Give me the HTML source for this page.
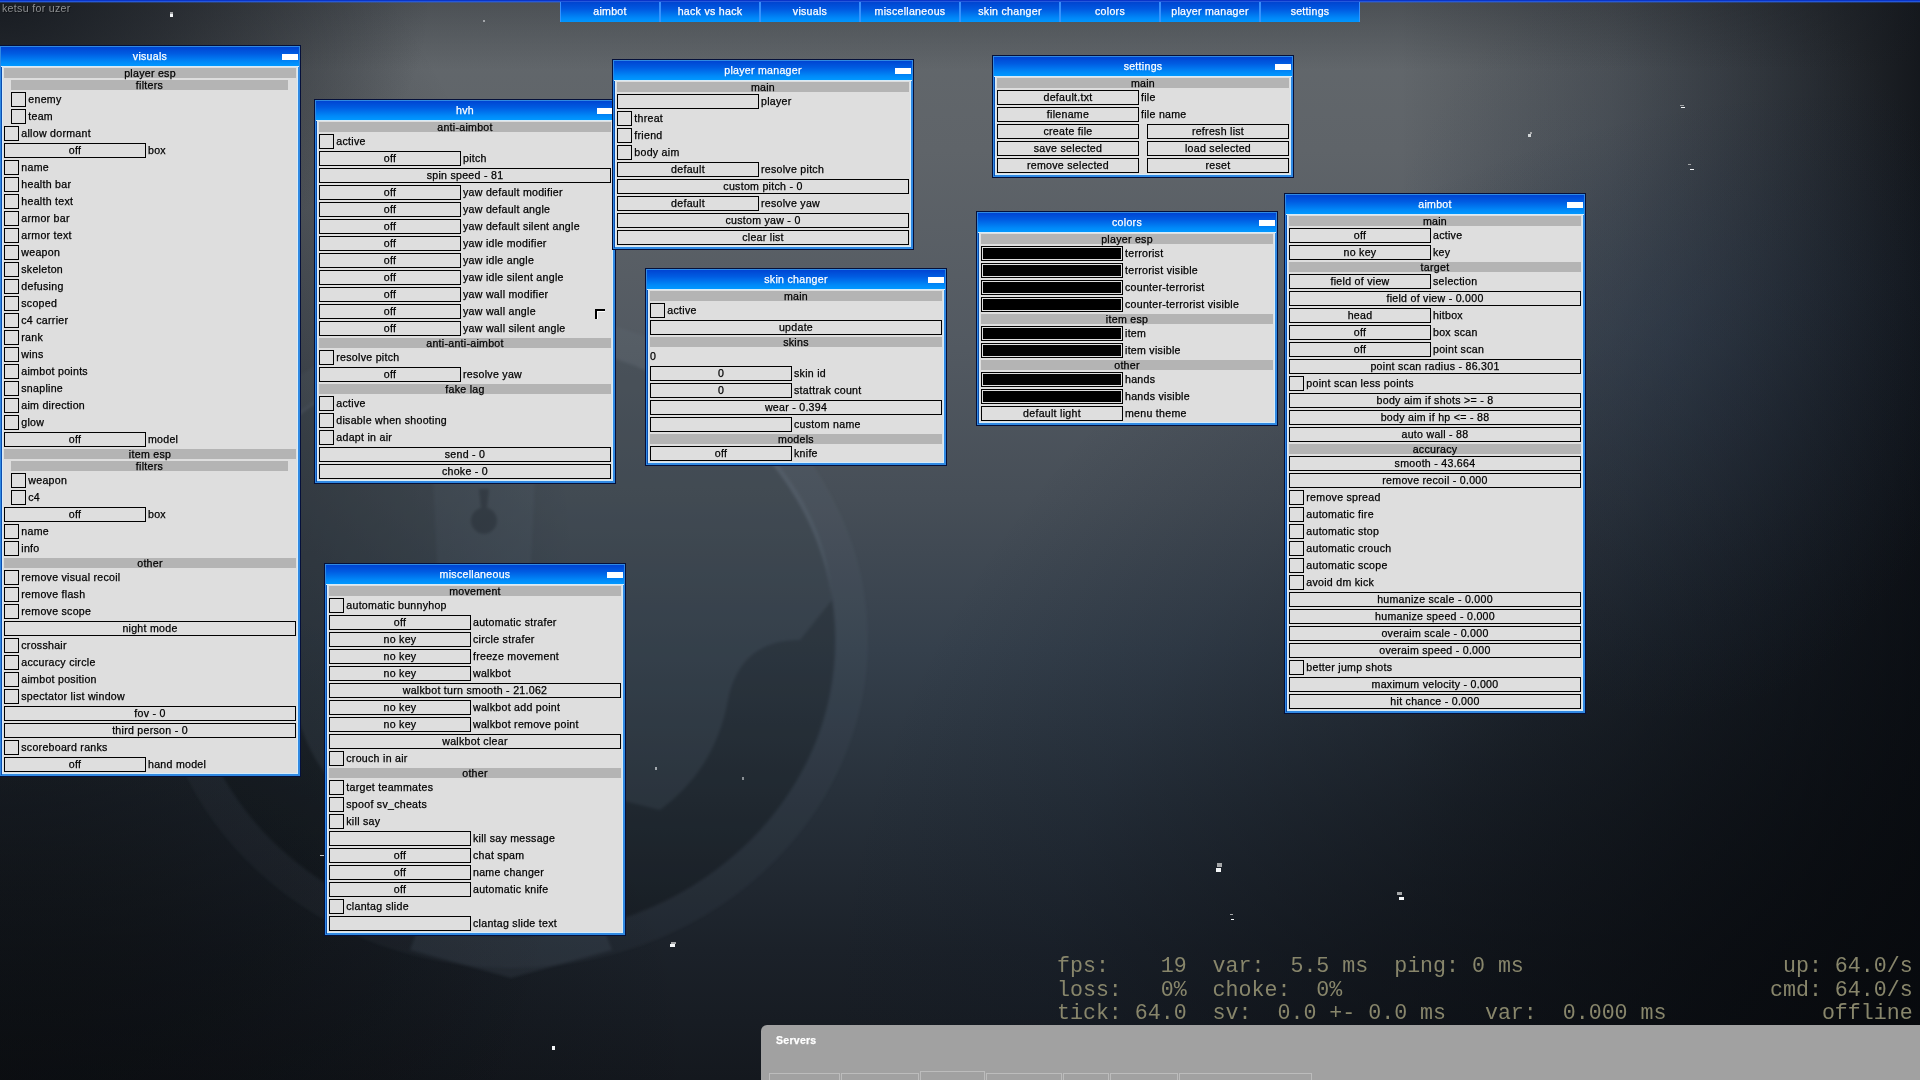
<!DOCTYPE html>
<html><head><meta charset="utf-8"><title>menu</title>
<style>
html,body{margin:0;padding:0;}
body>*{will-change:transform;}
body{width:1920px;height:1080px;overflow:hidden;position:relative;background:#1b2028;font-family:"Liberation Sans",sans-serif;font-size:10.6px;letter-spacing:.28px;-webkit-text-stroke:.25px;color:#000;}
#bg{position:absolute;left:0;top:0;width:1920px;height:1080px;
background:
 radial-gradient(ellipse 430px 300px at 0px 0px, rgba(22,26,32,.95) 0%, rgba(22,26,32,.6) 40%, rgba(22,26,32,0) 100%),
 linear-gradient(to bottom, rgba(20,24,30,.3) 0px, rgba(20,24,30,0) 70px),
 radial-gradient(ellipse 300px 380px at 1670px 340px, rgba(44,66,96,.22) 0%, rgba(44,66,96,0) 100%),
 radial-gradient(ellipse 700px 520px at 0px 1080px, rgba(6,8,10,.5) 0%, rgba(6,8,10,.25) 55%, rgba(6,8,10,0) 100%),
 radial-gradient(ellipse 1100px 1000px at 1920px 1080px, rgba(7,9,12,.86) 0%, rgba(9,12,17,.5) 50%, rgba(16,24,36,.2) 80%, rgba(18,28,42,0) 100%),
 linear-gradient(to right, rgba(10,14,20,0) 1400px, rgba(10,14,20,.26) 1613px, rgba(10,14,20,.6) 1780px, rgba(8,11,16,.86) 1920px),
 radial-gradient(ellipse 580px 900px at 0px 660px, rgba(10,12,16,.55) 0%, rgba(10,12,16,.33) 55%, rgba(10,12,16,0) 100%),
 linear-gradient(to bottom, #63686c 0px, #5f6469 150px, #525961 350px, #464e57 500px, #35404c 650px, #27303a 800px, #1b2129 950px, #14181e 1080px);
}
.w{position:absolute;width:296px;border:2px solid #3089e2;outline:1px solid #05103a;background:#dedede;box-sizing:content-box;box-shadow:inset 0 0 0 1px #d6ecfa;}
.w::before{content:"";position:absolute;left:-1px;top:-1px;bottom:-1px;width:1px;background:#0b4db0;}
.tb{position:absolute;left:-1px;top:-1px;width:298px;height:19px;background:linear-gradient(#0044d2 0%,#005ce2 35%,#008af9 80%,#0098ff 100%);box-shadow:0 1px 0 #d6ecfa;}
.tt{position:absolute;left:0;top:-2px;width:296px;height:20px;line-height:20px;text-align:center;color:#fff;white-space:nowrap;}
.mn{position:absolute;left:280px;top:6px;width:16px;height:6px;background:#fff;}
.h{position:absolute;height:10px;line-height:10px;background:#b4b4b4;text-align:center;white-space:nowrap;}
.c{position:absolute;width:13px;height:13px;border:1px solid #000;}
.l{position:absolute;height:15px;line-height:15px;white-space:nowrap;}
.b{position:absolute;height:13px;line-height:13px;border:1px solid #000;text-align:center;white-space:nowrap;}
.k{position:absolute;width:140px;height:13px;border:1px solid #000;}
.k i{position:absolute;left:1px;top:1px;right:1px;bottom:1px;background:#000;}
.h span,.l span,.b span,.tt span{position:relative;top:-0.5px;}

#strip{position:absolute;left:0;top:0;width:1920px;height:3px;background:linear-gradient(#0a34c8 0,#0a34c8 1px,#2458dc 1px,#2458dc 2px,rgba(50,100,220,.35) 2px,rgba(50,100,220,.35) 3px);}
#tabs{position:absolute;left:560px;top:2px;width:800px;height:20px;background:linear-gradient(#0044d0 0%,#0058e0 35%,#0088f8 80%,#0096ff 100%);}
.tab{position:absolute;top:0;width:100px;height:20px;line-height:20px;text-align:center;color:#fff;white-space:nowrap;box-sizing:border-box;border-left:1px solid rgba(60,150,255,.9);border-right:1px solid rgba(60,150,255,.9);}
.tab span{position:relative;top:-1.5px;}
#wm{position:absolute;left:2px;top:1px;height:14px;line-height:14px;color:#8e9092;letter-spacing:.32px;-webkit-text-stroke:0;white-space:nowrap;text-shadow:1px 1px 0 rgba(0,0,0,.45);}
.tab:nth-child(1){left:0px}.tab:nth-child(2){left:100px}.tab:nth-child(3){left:200px}.tab:nth-child(4){left:300px}.tab:nth-child(5){left:400px}.tab:nth-child(6){left:500px}.tab:nth-child(7){left:600px}.tab:nth-child(8){left:700px}.sp{position:absolute;background:#f4f6f8;}
.sg{position:absolute;background:#a4a6a8;}
#ng,#ng2{position:absolute;margin:0;font-family:"Liberation Mono",monospace;font-size:21.62px;line-height:23.7px;color:#88866b;white-space:pre;letter-spacing:0;-webkit-text-stroke:0;}
#ng{left:1057px;top:955px;}
#ng2{right:7px;top:955px;text-align:right;}
#srv{position:absolute;left:761px;top:1025px;width:1170px;height:70px;background:#a1a1a1;border-top-left-radius:6px;}
#srvt{position:absolute;left:15px;top:8px;font-weight:bold;font-size:10.5px;color:#fff;line-height:14px;}
.st{position:absolute;top:48px;height:20px;border:1px solid #bcbcbc;border-bottom:none;box-sizing:border-box;}
#mark{position:absolute;left:595px;top:309px;width:8px;height:8px;border-left:2px solid #000;border-top:2px solid #000;box-shadow:inset 1px 1px 0 #fff;}
</style></head>
<body>
<div id="bg"></div>
<svg id="logo" width="1920" height="1080" viewBox="0 0 1920 1080" style="position:absolute;left:0;top:0;filter:blur(1.5px)">
<ellipse cx="511" cy="640" rx="324" ry="297" fill="#05080c" fill-opacity=".2"/>
<ellipse cx="511" cy="640" rx="341" ry="312" fill="none" stroke="#a8bccf" stroke-opacity=".045" stroke-width="32"/>
<path d="M190 600 C200 450 350 345 511 343 C672 345 822 450 832 600 L800 640 Q740 640 728 700 Q715 770 660 810 L600 795 L572 760 L578 860 L612 950 L511 978 L410 950 L444 860 L450 760 L422 795 L362 810 Q307 770 294 700 Q282 640 222 640 Z" fill="#a8bccf" fill-opacity=".085"/>
<path d="M431 440 L537 440 L529 600 L439 600 Z" fill="#b8cce0" fill-opacity=".04"/>
<path d="M479 489 L489 489 L487 508 A13 13 0 1 1 481 508 Z" fill="#0a1018" fill-opacity=".25"/>
</svg>
<div class="sp" style="left:552px;top:1046px;width:3px;height:4px"></div>
<div class="sp" style="left:655px;top:767px;width:2px;height:3px;opacity:.6"></div>
<div class="sp" style="left:742px;top:777px;width:2px;height:3px;opacity:.5"></div>
<div class="sp" style="left:483px;top:20px;width:2px;height:2px;opacity:.5"></div>
<div class="sp" style="left:320px;top:855px;width:4px;height:1px;opacity:.8"></div>
<div class="sg" style="left:671px;top:942px;width:5px;height:2px"></div><div class="sp" style="left:670px;top:944px;width:5px;height:3px"></div>
<div class="sg" style="left:1217px;top:863px;width:5px;height:4px"></div><div class="sp" style="left:1216px;top:868px;width:5px;height:4px"></div>
<div class="sg" style="left:1397px;top:892px;width:5px;height:3px"></div><div class="sp" style="left:1399px;top:897px;width:5px;height:3px"></div>
<div class="sg" style="left:1230px;top:914px;width:3px;height:1px"></div><div class="sp" style="left:1231px;top:919px;width:3px;height:1px"></div>
<div class="sg" style="left:170px;top:12px;width:3px;height:2px"></div><div class="sp" style="left:170px;top:14px;width:3px;height:3px"></div>
<div class="sg" style="left:1680px;top:105px;width:4px;height:1px"></div><div class="sp" style="left:1681px;top:107px;width:4px;height:1px"></div>
<div class="sg" style="left:1530px;top:132px;width:2px;height:2px"></div><div class="sp" style="left:1528px;top:134px;width:3px;height:3px;opacity:.8"></div>
<div class="sg" style="left:1688px;top:164px;width:3px;height:1px"></div><div class="sp" style="left:1690px;top:169px;width:4px;height:1px"></div>

<div id="strip"></div>
<div id="tabs"><div class="tab"><span>aimbot</span></div><div class="tab"><span>hack vs hack</span></div><div class="tab"><span>visuals</span></div><div class="tab"><span>miscellaneous</span></div><div class="tab"><span>skin changer</span></div><div class="tab"><span>colors</span></div><div class="tab"><span>player manager</span></div><div class="tab"><span>settings</span></div></div>
<div id="wm">ketsu for uzer</div>
<pre id="ng">fps:    19  var:  5.5 ms  ping: 0 ms
loss:   0%  choke:  0%
tick: 64.0  sv:  0.0 +- 0.0 ms   var:  0.000 ms</pre>
<pre id="ng2">up: 64.0/s
cmd: 64.0/s
offline</pre>
<div id="srv"><div id="srvt">Servers</div>
<div class="st" style="left:8px;width:71px"></div>
<div class="st" style="left:80px;width:78px"></div>
<div class="st" style="left:159px;width:65px;top:46px"></div>
<div class="st" style="left:225px;width:76px"></div>
<div class="st" style="left:302px;width:46px"></div>
<div class="st" style="left:349px;width:68px"></div>
<div class="st" style="left:418px;width:133px"></div>
</div>

<div class="w" style="left:0px;top:46px;height:726px"><div class="tb"></div><div class="tt"><span>visuals</span></div><div class="mn"></div><div class="h" style="left:2px;top:20px;width:292px"><span>player esp</span></div><div class="h" style="left:9px;top:32px;width:277px"><span>filters</span></div><div class="c" style="left:9px;top:44px"></div><div class="l" style="left:26.3px;top:44px"><span>enemy</span></div><div class="c" style="left:9px;top:61px"></div><div class="l" style="left:26.3px;top:61px"><span>team</span></div><div class="c" style="left:2px;top:78px"></div><div class="l" style="left:19.3px;top:78px"><span>allow dormant</span></div><div class="b" style="left:2px;top:95px;width:140px"><span>off</span></div><div class="l" style="left:146px;top:95px"><span>box</span></div><div class="c" style="left:2px;top:112px"></div><div class="l" style="left:19.3px;top:112px"><span>name</span></div><div class="c" style="left:2px;top:129px"></div><div class="l" style="left:19.3px;top:129px"><span>health bar</span></div><div class="c" style="left:2px;top:146px"></div><div class="l" style="left:19.3px;top:146px"><span>health text</span></div><div class="c" style="left:2px;top:163px"></div><div class="l" style="left:19.3px;top:163px"><span>armor bar</span></div><div class="c" style="left:2px;top:180px"></div><div class="l" style="left:19.3px;top:180px"><span>armor text</span></div><div class="c" style="left:2px;top:197px"></div><div class="l" style="left:19.3px;top:197px"><span>weapon</span></div><div class="c" style="left:2px;top:214px"></div><div class="l" style="left:19.3px;top:214px"><span>skeleton</span></div><div class="c" style="left:2px;top:231px"></div><div class="l" style="left:19.3px;top:231px"><span>defusing</span></div><div class="c" style="left:2px;top:248px"></div><div class="l" style="left:19.3px;top:248px"><span>scoped</span></div><div class="c" style="left:2px;top:265px"></div><div class="l" style="left:19.3px;top:265px"><span>c4 carrier</span></div><div class="c" style="left:2px;top:282px"></div><div class="l" style="left:19.3px;top:282px"><span>rank</span></div><div class="c" style="left:2px;top:299px"></div><div class="l" style="left:19.3px;top:299px"><span>wins</span></div><div class="c" style="left:2px;top:316px"></div><div class="l" style="left:19.3px;top:316px"><span>aimbot points</span></div><div class="c" style="left:2px;top:333px"></div><div class="l" style="left:19.3px;top:333px"><span>snapline</span></div><div class="c" style="left:2px;top:350px"></div><div class="l" style="left:19.3px;top:350px"><span>aim direction</span></div><div class="c" style="left:2px;top:367px"></div><div class="l" style="left:19.3px;top:367px"><span>glow</span></div><div class="b" style="left:2px;top:384px;width:140px"><span>off</span></div><div class="l" style="left:146px;top:384px"><span>model</span></div><div class="h" style="left:2px;top:401px;width:292px"><span>item esp</span></div><div class="h" style="left:9px;top:413px;width:277px"><span>filters</span></div><div class="c" style="left:9px;top:425px"></div><div class="l" style="left:26.3px;top:425px"><span>weapon</span></div><div class="c" style="left:9px;top:442px"></div><div class="l" style="left:26.3px;top:442px"><span>c4</span></div><div class="b" style="left:2px;top:459px;width:140px"><span>off</span></div><div class="l" style="left:146px;top:459px"><span>box</span></div><div class="c" style="left:2px;top:476px"></div><div class="l" style="left:19.3px;top:476px"><span>name</span></div><div class="c" style="left:2px;top:493px"></div><div class="l" style="left:19.3px;top:493px"><span>info</span></div><div class="h" style="left:2px;top:510px;width:292px"><span>other</span></div><div class="c" style="left:2px;top:522px"></div><div class="l" style="left:19.3px;top:522px"><span>remove visual recoil</span></div><div class="c" style="left:2px;top:539px"></div><div class="l" style="left:19.3px;top:539px"><span>remove flash</span></div><div class="c" style="left:2px;top:556px"></div><div class="l" style="left:19.3px;top:556px"><span>remove scope</span></div><div class="b" style="left:2px;top:573px;width:290px"><span>night mode</span></div><div class="c" style="left:2px;top:590px"></div><div class="l" style="left:19.3px;top:590px"><span>crosshair</span></div><div class="c" style="left:2px;top:607px"></div><div class="l" style="left:19.3px;top:607px"><span>accuracy circle</span></div><div class="c" style="left:2px;top:624px"></div><div class="l" style="left:19.3px;top:624px"><span>aimbot position</span></div><div class="c" style="left:2px;top:641px"></div><div class="l" style="left:19.3px;top:641px"><span>spectator list window</span></div><div class="b" style="left:2px;top:658px;width:290px"><span>fov - 0</span></div><div class="b" style="left:2px;top:675px;width:290px"><span>third person - 0</span></div><div class="c" style="left:2px;top:692px"></div><div class="l" style="left:19.3px;top:692px"><span>scoreboard ranks</span></div><div class="b" style="left:2px;top:709px;width:140px"><span>off</span></div><div class="l" style="left:146px;top:709px"><span>hand model</span></div></div>
<div class="w" style="left:315px;top:100px;height:379px"><div class="tb"></div><div class="tt"><span>hvh</span></div><div class="mn"></div><div class="h" style="left:2px;top:20px;width:292px"><span>anti-aimbot</span></div><div class="c" style="left:2px;top:32px"></div><div class="l" style="left:19.3px;top:32px"><span>active</span></div><div class="b" style="left:2px;top:49px;width:140px"><span>off</span></div><div class="l" style="left:146px;top:49px"><span>pitch</span></div><div class="b" style="left:2px;top:66px;width:290px"><span>spin speed - 81</span></div><div class="b" style="left:2px;top:83px;width:140px"><span>off</span></div><div class="l" style="left:146px;top:83px"><span>yaw default modifier</span></div><div class="b" style="left:2px;top:100px;width:140px"><span>off</span></div><div class="l" style="left:146px;top:100px"><span>yaw default angle</span></div><div class="b" style="left:2px;top:117px;width:140px"><span>off</span></div><div class="l" style="left:146px;top:117px"><span>yaw default silent angle</span></div><div class="b" style="left:2px;top:134px;width:140px"><span>off</span></div><div class="l" style="left:146px;top:134px"><span>yaw idle modifier</span></div><div class="b" style="left:2px;top:151px;width:140px"><span>off</span></div><div class="l" style="left:146px;top:151px"><span>yaw idle angle</span></div><div class="b" style="left:2px;top:168px;width:140px"><span>off</span></div><div class="l" style="left:146px;top:168px"><span>yaw idle silent angle</span></div><div class="b" style="left:2px;top:185px;width:140px"><span>off</span></div><div class="l" style="left:146px;top:185px"><span>yaw wall modifier</span></div><div class="b" style="left:2px;top:202px;width:140px"><span>off</span></div><div class="l" style="left:146px;top:202px"><span>yaw wall angle</span></div><div class="b" style="left:2px;top:219px;width:140px"><span>off</span></div><div class="l" style="left:146px;top:219px"><span>yaw wall silent angle</span></div><div class="h" style="left:2px;top:236px;width:292px"><span>anti-anti-aimbot</span></div><div class="c" style="left:2px;top:248px"></div><div class="l" style="left:19.3px;top:248px"><span>resolve pitch</span></div><div class="b" style="left:2px;top:265px;width:140px"><span>off</span></div><div class="l" style="left:146px;top:265px"><span>resolve yaw</span></div><div class="h" style="left:2px;top:282px;width:292px"><span>fake lag</span></div><div class="c" style="left:2px;top:294px"></div><div class="l" style="left:19.3px;top:294px"><span>active</span></div><div class="c" style="left:2px;top:311px"></div><div class="l" style="left:19.3px;top:311px"><span>disable when shooting</span></div><div class="c" style="left:2px;top:328px"></div><div class="l" style="left:19.3px;top:328px"><span>adapt in air</span></div><div class="b" style="left:2px;top:345px;width:290px"><span>send - 0</span></div><div class="b" style="left:2px;top:362px;width:290px"><span>choke - 0</span></div></div>
<div class="w" style="left:325px;top:564px;height:367px"><div class="tb"></div><div class="tt"><span>miscellaneous</span></div><div class="mn"></div><div class="h" style="left:2px;top:20px;width:292px"><span>movement</span></div><div class="c" style="left:2px;top:32px"></div><div class="l" style="left:19.3px;top:32px"><span>automatic bunnyhop</span></div><div class="b" style="left:2px;top:49px;width:140px"><span>off</span></div><div class="l" style="left:146px;top:49px"><span>automatic strafer</span></div><div class="b" style="left:2px;top:66px;width:140px"><span>no key</span></div><div class="l" style="left:146px;top:66px"><span>circle strafer</span></div><div class="b" style="left:2px;top:83px;width:140px"><span>no key</span></div><div class="l" style="left:146px;top:83px"><span>freeze movement</span></div><div class="b" style="left:2px;top:100px;width:140px"><span>no key</span></div><div class="l" style="left:146px;top:100px"><span>walkbot</span></div><div class="b" style="left:2px;top:117px;width:290px"><span>walkbot turn smooth - 21.062</span></div><div class="b" style="left:2px;top:134px;width:140px"><span>no key</span></div><div class="l" style="left:146px;top:134px"><span>walkbot add point</span></div><div class="b" style="left:2px;top:151px;width:140px"><span>no key</span></div><div class="l" style="left:146px;top:151px"><span>walkbot remove point</span></div><div class="b" style="left:2px;top:168px;width:290px"><span>walkbot clear</span></div><div class="c" style="left:2px;top:185px"></div><div class="l" style="left:19.3px;top:185px"><span>crouch in air</span></div><div class="h" style="left:2px;top:202px;width:292px"><span>other</span></div><div class="c" style="left:2px;top:214px"></div><div class="l" style="left:19.3px;top:214px"><span>target teammates</span></div><div class="c" style="left:2px;top:231px"></div><div class="l" style="left:19.3px;top:231px"><span>spoof sv_cheats</span></div><div class="c" style="left:2px;top:248px"></div><div class="l" style="left:19.3px;top:248px"><span>kill say</span></div><div class="b" style="left:2px;top:265px;width:140px"><span></span></div><div class="l" style="left:146px;top:265px"><span>kill say message</span></div><div class="b" style="left:2px;top:282px;width:140px"><span>off</span></div><div class="l" style="left:146px;top:282px"><span>chat spam</span></div><div class="b" style="left:2px;top:299px;width:140px"><span>off</span></div><div class="l" style="left:146px;top:299px"><span>name changer</span></div><div class="b" style="left:2px;top:316px;width:140px"><span>off</span></div><div class="l" style="left:146px;top:316px"><span>automatic knife</span></div><div class="c" style="left:2px;top:333px"></div><div class="l" style="left:19.3px;top:333px"><span>clantag slide</span></div><div class="b" style="left:2px;top:350px;width:140px"><span></span></div><div class="l" style="left:146px;top:350px"><span>clantag slide text</span></div></div>
<div class="w" style="left:613px;top:60px;height:185px"><div class="tb"></div><div class="tt"><span>player manager</span></div><div class="mn"></div><div class="h" style="left:2px;top:20px;width:292px"><span>main</span></div><div class="b" style="left:2px;top:32px;width:140px"><span></span></div><div class="l" style="left:146px;top:32px"><span>player</span></div><div class="c" style="left:2px;top:49px"></div><div class="l" style="left:19.3px;top:49px"><span>threat</span></div><div class="c" style="left:2px;top:66px"></div><div class="l" style="left:19.3px;top:66px"><span>friend</span></div><div class="c" style="left:2px;top:83px"></div><div class="l" style="left:19.3px;top:83px"><span>body aim</span></div><div class="b" style="left:2px;top:100px;width:140px"><span>default</span></div><div class="l" style="left:146px;top:100px"><span>resolve pitch</span></div><div class="b" style="left:2px;top:117px;width:290px"><span>custom pitch - 0</span></div><div class="b" style="left:2px;top:134px;width:140px"><span>default</span></div><div class="l" style="left:146px;top:134px"><span>resolve yaw</span></div><div class="b" style="left:2px;top:151px;width:290px"><span>custom yaw - 0</span></div><div class="b" style="left:2px;top:168px;width:290px"><span>clear list</span></div></div>
<div class="w" style="left:646px;top:269px;height:192px"><div class="tb"></div><div class="tt"><span>skin changer</span></div><div class="mn"></div><div class="h" style="left:2px;top:20px;width:292px"><span>main</span></div><div class="c" style="left:2px;top:32px"></div><div class="l" style="left:19.3px;top:32px"><span>active</span></div><div class="b" style="left:2px;top:49px;width:290px"><span>update</span></div><div class="h" style="left:2px;top:66px;width:292px"><span>skins</span></div><div class="l" style="left:2px;top:78px"><span>0</span></div><div class="b" style="left:2px;top:95px;width:140px"><span>0</span></div><div class="l" style="left:146px;top:95px"><span>skin id</span></div><div class="b" style="left:2px;top:112px;width:140px"><span>0</span></div><div class="l" style="left:146px;top:112px"><span>stattrak count</span></div><div class="b" style="left:2px;top:129px;width:290px"><span>wear - 0.394</span></div><div class="b" style="left:2px;top:146px;width:140px"><span></span></div><div class="l" style="left:146px;top:146px"><span>custom name</span></div><div class="h" style="left:2px;top:163px;width:292px"><span>models</span></div><div class="b" style="left:2px;top:175px;width:140px"><span>off</span></div><div class="l" style="left:146px;top:175px"><span>knife</span></div></div>
<div class="w" style="left:993px;top:56px;height:117px"><div class="tb"></div><div class="tt"><span>settings</span></div><div class="mn"></div><div class="h" style="left:2px;top:20px;width:292px"><span>main</span></div><div class="b" style="left:2px;top:32px;width:140px"><span>default.txt</span></div><div class="l" style="left:146px;top:32px"><span>file</span></div><div class="b" style="left:2px;top:49px;width:140px"><span>filename</span></div><div class="l" style="left:146px;top:49px"><span>file name</span></div><div class="b" style="left:2px;top:66px;width:140px"><span>create file</span></div><div class="b" style="left:152px;top:66px;width:140px"><span>refresh list</span></div><div class="b" style="left:2px;top:83px;width:140px"><span>save selected</span></div><div class="b" style="left:152px;top:83px;width:140px"><span>load selected</span></div><div class="b" style="left:2px;top:100px;width:140px"><span>remove selected</span></div><div class="b" style="left:152px;top:100px;width:140px"><span>reset</span></div></div>
<div class="w" style="left:977px;top:212px;height:209px"><div class="tb"></div><div class="tt"><span>colors</span></div><div class="mn"></div><div class="h" style="left:2px;top:20px;width:292px"><span>player esp</span></div><div class="k" style="left:2px;top:32px"><i></i></div><div class="l" style="left:146px;top:32px"><span>terrorist</span></div><div class="k" style="left:2px;top:49px"><i></i></div><div class="l" style="left:146px;top:49px"><span>terrorist visible</span></div><div class="k" style="left:2px;top:66px"><i></i></div><div class="l" style="left:146px;top:66px"><span>counter-terrorist</span></div><div class="k" style="left:2px;top:83px"><i></i></div><div class="l" style="left:146px;top:83px"><span>counter-terrorist visible</span></div><div class="h" style="left:2px;top:100px;width:292px"><span>item esp</span></div><div class="k" style="left:2px;top:112px"><i></i></div><div class="l" style="left:146px;top:112px"><span>item</span></div><div class="k" style="left:2px;top:129px"><i></i></div><div class="l" style="left:146px;top:129px"><span>item visible</span></div><div class="h" style="left:2px;top:146px;width:292px"><span>other</span></div><div class="k" style="left:2px;top:158px"><i></i></div><div class="l" style="left:146px;top:158px"><span>hands</span></div><div class="k" style="left:2px;top:175px"><i></i></div><div class="l" style="left:146px;top:175px"><span>hands visible</span></div><div class="b" style="left:2px;top:192px;width:140px"><span>default light</span></div><div class="l" style="left:146px;top:192px"><span>menu theme</span></div></div>
<div class="w" style="left:1285px;top:194px;height:515px"><div class="tb"></div><div class="tt"><span>aimbot</span></div><div class="mn"></div><div class="h" style="left:2px;top:20px;width:292px"><span>main</span></div><div class="b" style="left:2px;top:32px;width:140px"><span>off</span></div><div class="l" style="left:146px;top:32px"><span>active</span></div><div class="b" style="left:2px;top:49px;width:140px"><span>no key</span></div><div class="l" style="left:146px;top:49px"><span>key</span></div><div class="h" style="left:2px;top:66px;width:292px"><span>target</span></div><div class="b" style="left:2px;top:78px;width:140px"><span>field of view</span></div><div class="l" style="left:146px;top:78px"><span>selection</span></div><div class="b" style="left:2px;top:95px;width:290px"><span>field of view - 0.000</span></div><div class="b" style="left:2px;top:112px;width:140px"><span>head</span></div><div class="l" style="left:146px;top:112px"><span>hitbox</span></div><div class="b" style="left:2px;top:129px;width:140px"><span>off</span></div><div class="l" style="left:146px;top:129px"><span>box scan</span></div><div class="b" style="left:2px;top:146px;width:140px"><span>off</span></div><div class="l" style="left:146px;top:146px"><span>point scan</span></div><div class="b" style="left:2px;top:163px;width:290px"><span>point scan radius - 86.301</span></div><div class="c" style="left:2px;top:180px"></div><div class="l" style="left:19.3px;top:180px"><span>point scan less points</span></div><div class="b" style="left:2px;top:197px;width:290px"><span>body aim if shots &gt;= - 8</span></div><div class="b" style="left:2px;top:214px;width:290px"><span>body aim if hp &lt;= - 88</span></div><div class="b" style="left:2px;top:231px;width:290px"><span>auto wall - 88</span></div><div class="h" style="left:2px;top:248px;width:292px"><span>accuracy</span></div><div class="b" style="left:2px;top:260px;width:290px"><span>smooth - 43.664</span></div><div class="b" style="left:2px;top:277px;width:290px"><span>remove recoil - 0.000</span></div><div class="c" style="left:2px;top:294px"></div><div class="l" style="left:19.3px;top:294px"><span>remove spread</span></div><div class="c" style="left:2px;top:311px"></div><div class="l" style="left:19.3px;top:311px"><span>automatic fire</span></div><div class="c" style="left:2px;top:328px"></div><div class="l" style="left:19.3px;top:328px"><span>automatic stop</span></div><div class="c" style="left:2px;top:345px"></div><div class="l" style="left:19.3px;top:345px"><span>automatic crouch</span></div><div class="c" style="left:2px;top:362px"></div><div class="l" style="left:19.3px;top:362px"><span>automatic scope</span></div><div class="c" style="left:2px;top:379px"></div><div class="l" style="left:19.3px;top:379px"><span>avoid dm kick</span></div><div class="b" style="left:2px;top:396px;width:290px"><span>humanize scale - 0.000</span></div><div class="b" style="left:2px;top:413px;width:290px"><span>humanize speed - 0.000</span></div><div class="b" style="left:2px;top:430px;width:290px"><span>overaim scale - 0.000</span></div><div class="b" style="left:2px;top:447px;width:290px"><span>overaim speed - 0.000</span></div><div class="c" style="left:2px;top:464px"></div><div class="l" style="left:19.3px;top:464px"><span>better jump shots</span></div><div class="b" style="left:2px;top:481px;width:290px"><span>maximum velocity - 0.000</span></div><div class="b" style="left:2px;top:498px;width:290px"><span>hit chance - 0.000</span></div></div>
<div id="mark"></div>
</body></html>
